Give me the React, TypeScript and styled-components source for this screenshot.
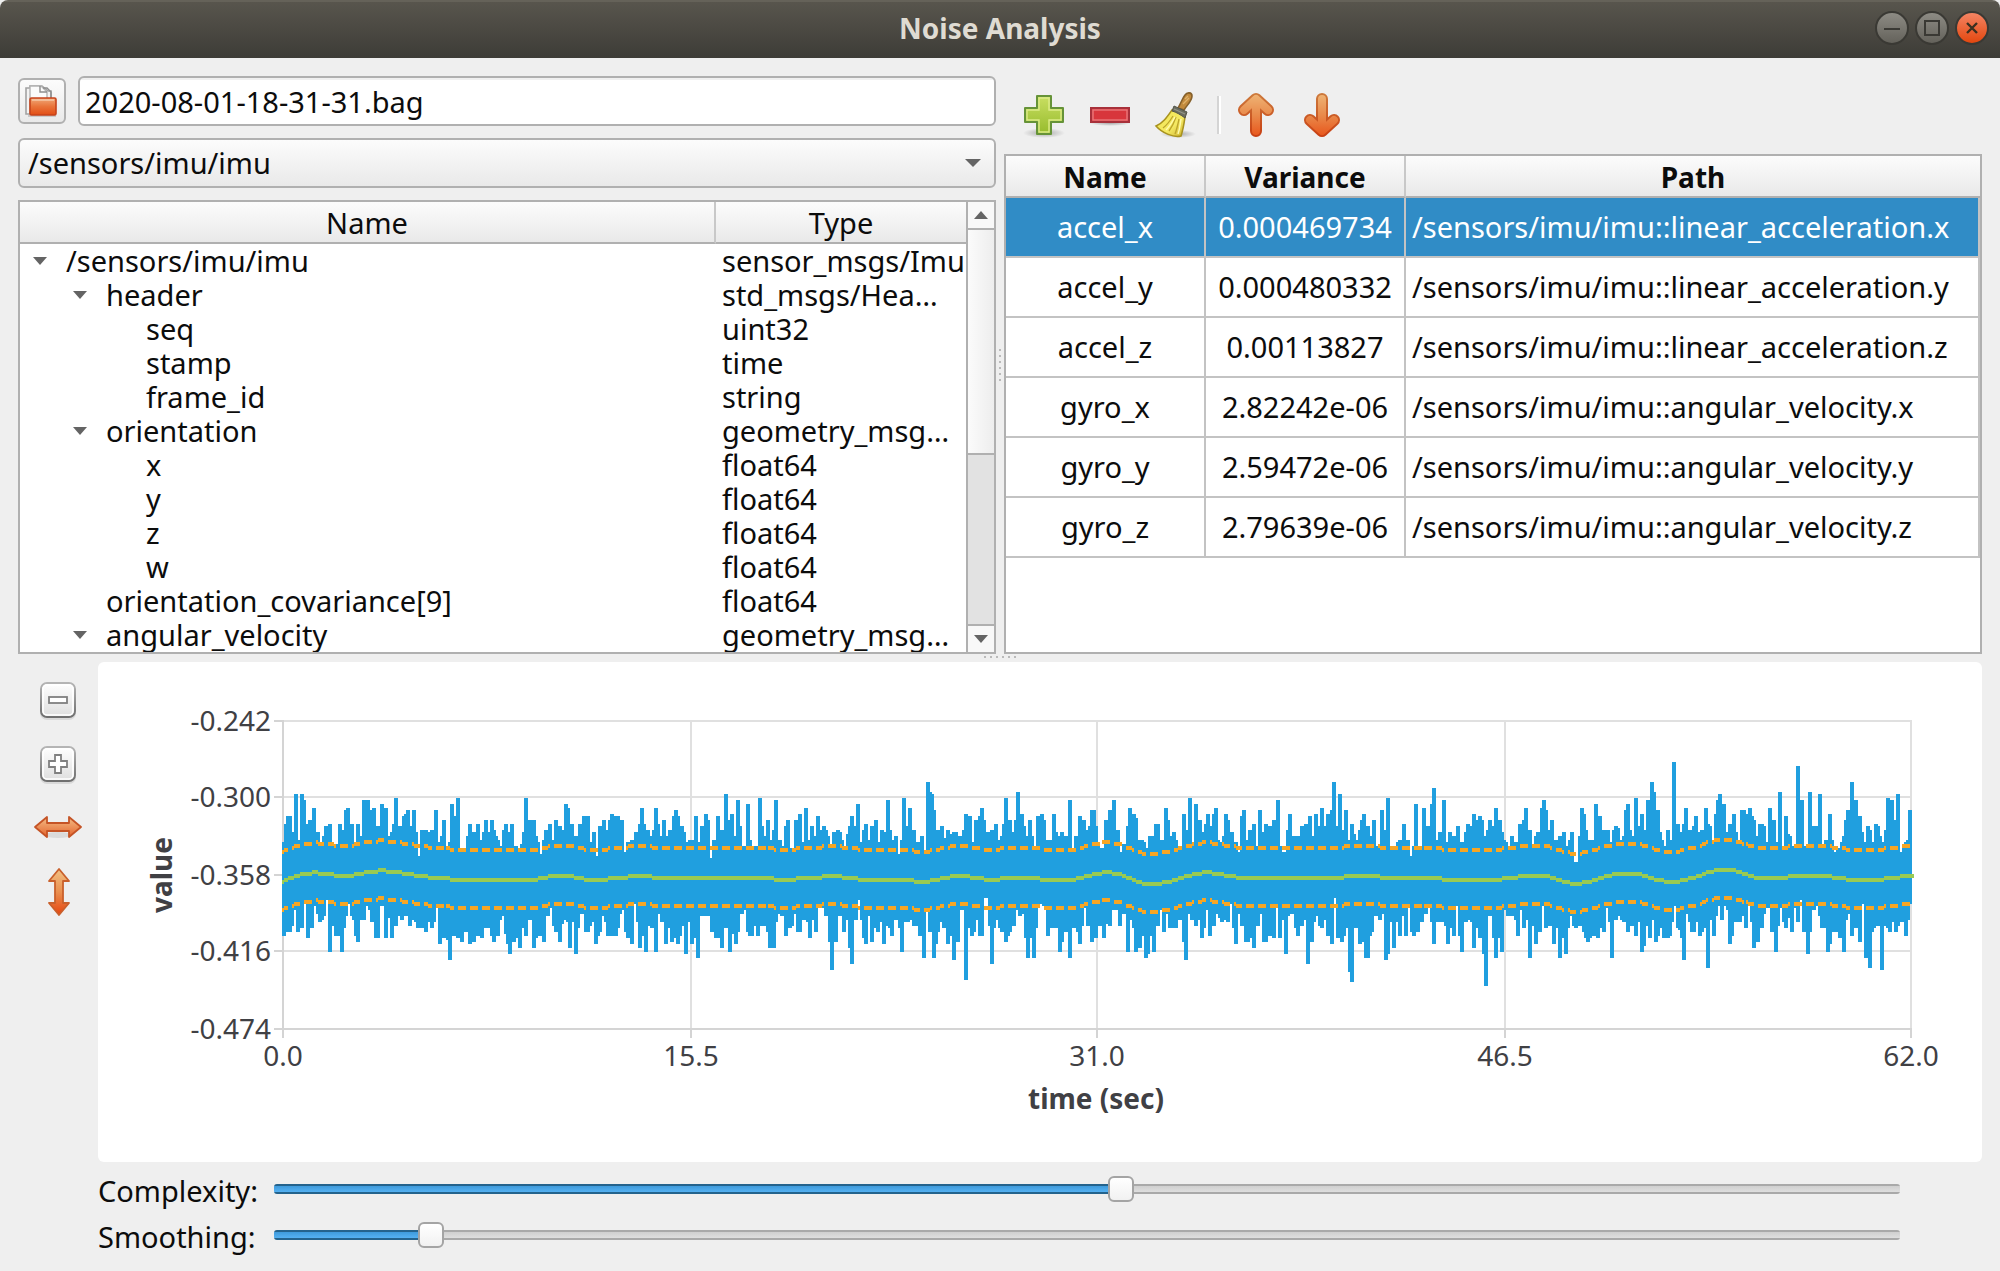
import React, { useState } from 'react';
import styled, { createGlobalStyle, css } from 'styled-components';

const GlobalStyle = createGlobalStyle`
  *, *::before, *::after { box-sizing: border-box; }
  html { background: #efefef; }
  body {
    margin: 0;
    color: #0c0c0c;
    font-family: "Noto Sans", "Open Sans", sans-serif;
    font-size: 29px;
    line-height: 34px;
  }
  button, input, select { font: inherit; color: inherit; margin: 0; }
`;

const edge = '#b0b0b0';
const raised = 'linear-gradient(#fcfcfc, #e9e9e9)';

/* ---------- window frame ---------- */

const Window = styled.div`
  min-height: 100vh;
  background: #efefef;
`;

const TitleBar = styled.header`
  display: grid;
  grid-template-columns: 1fr auto 1fr;
  align-items: center;
  height: 58px;
  padding: 0 11px 2px;
  border-radius: 8px 8px 0 0;
  background: linear-gradient(#656259 0 2px, #58554d 2px, #3d3c37);
`;

const Title = styled.h1`
  grid-column: 2;
  margin: 0;
  color: #dfdbd2;
  font-size: 28px;
  line-height: 34px;
  font-weight: 700;
`;

const WindowButtons = styled.div`
  display: flex;
  justify-content: flex-end;
  gap: 6px;
`;

const WindowButton = styled.button<{ $close?: boolean }>`
  display: grid;
  place-items: center;
  width: 34px;
  height: 34px;
  padding: 0;
  border: 2px solid #3a3934;
  border-radius: 50%;
  background: ${p => (p.$close ? 'linear-gradient(#f58463, #e2470f)' : 'linear-gradient(#8d8b84, #64625b)')};
`;

const Content = styled.main`
  padding: 18px 18px 13px;
`;

const Panels = styled.div`
  display: grid;
  grid-template-columns: minmax(0, 1fr) 8px minmax(0, 1fr);
`;

const Splitter = styled.div<{ $row?: boolean }>`
  display: flex;
  align-items: center;
  justify-content: center;
  ${p => p.$row && css`height: 8px; align-items: flex-start; padding-top: 2px;`}
  &::before {
    content: "";
    ${p => p.$row
      ? css`width: 32px; height: 2px; background: repeating-linear-gradient(90deg, #bababa 0 2px, transparent 2px 6px);`
      : css`width: 2px; height: 32px; background: repeating-linear-gradient(#bababa 0 2px, transparent 2px 6px);`}
  }
`;

/* ---------- left panel ---------- */

const SourcePanel = styled.section`
  display: flex;
  flex-direction: column;
  gap: 12px;
`;

const FileRow = styled.div`
  display: flex;
  align-items: center;
  gap: 12px;
`;

const OpenButton = styled.button`
  display: grid;
  place-items: center;
  width: 48px;
  height: 46px;
  padding: 0;
  border: 2px solid ${edge};
  border-radius: 6px;
  background: ${raised};
`;

const FileInput = styled.input`
  flex: 1;
  min-width: 0;
  height: 50px;
  padding: 0 5px;
  border: 2px solid ${edge};
  border-radius: 6px;
  background: linear-gradient(#f0f0f0 0 2px, #fff 2px);
  outline: none;
`;

const SelectBox = styled.div`
  position: relative;
`;

const TopicSelect = styled.select`
  appearance: none;
  display: block;
  width: 100%;
  height: 50px;
  padding: 0 40px 0 8px;
  border: 2px solid ${edge};
  border-radius: 6px;
  background: ${raised};
`;

const Triangle = styled.span<{ $up?: boolean; $small?: boolean }>`
  display: block;
  width: ${p => (p.$small ? 14 : 16)}px;
  height: 8px;
  background: #646464;
  clip-path: ${p => (p.$up ? 'polygon(50% 0, 100% 100%, 0 100%)' : 'polygon(0 0, 100% 0, 50% 100%)')};
`;

const SelectArrow = styled(Triangle)`
  position: absolute;
  right: 15px;
  top: 21px;
  pointer-events: none;
`;

const TreeFrame = styled.div`
  display: flex;
  height: 454px;
  border: 2px solid ${edge};
  background: #fff;
  overflow: hidden;
`;

const TreeTable = styled.table`
  flex: 1;
  min-width: 0;
  width: 0;
  table-layout: fixed;
  border-collapse: separate;
  border-spacing: 0;
  th {
    height: 42px;
    padding: 2px 0 0;
    border-bottom: 2px solid ${edge};
    background: ${raised};
    font-weight: 400;
  }
  th:first-child { border-right: 2px solid #c8c8c8; }
  th:last-child { width: 250px; }
  td {
    height: 34px;
    padding: 0;
    white-space: nowrap;
  }
  td:last-child { padding-left: 6px; }
`;

const Node = styled.div<{ $depth: number }>`
  display: flex;
  align-items: center;
  gap: 12px;
  padding-left: ${p => 6 + p.$depth * 40}px;
`;

const Toggle = styled.button`
  display: grid;
  place-items: center;
  width: 28px;
  height: 34px;
  padding: 0;
  border: 0;
  background: none;
`;

const NoToggle = styled.span`
  width: 28px;
`;

const ScrollBar = styled.div`
  display: flex;
  flex-direction: column;
  width: 28px;
  border-left: 2px solid ${edge};
  background: #e2e2e2;
`;

const ScrollButton = styled.button`
  display: grid;
  place-items: center;
  height: 26px;
  padding: 0;
  border: 0;
  background: #f8f8f8;
`;

const ScrollTrack = styled.div`
  flex: 1;
  border: solid ${edge};
  border-width: 2px 0;
`;

const ScrollThumb = styled.div`
  height: 57%;
  border-bottom: 2px solid ${edge};
  background: linear-gradient(90deg, #fbfbfb, #ededed);
`;

/* ---------- right panel ---------- */

const ResultPanel = styled.section`
  display: flex;
  flex-direction: column;
`;

const ToolBar = styled.div`
  display: flex;
  align-items: center;
  height: 78px;
  padding-left: 16px;
  gap: 18px;
`;

const ToolButton = styled.button`
  display: grid;
  place-items: center;
  width: 48px;
  height: 48px;
  padding: 0;
  border: 0;
  background: none;
`;

const ToolSeparator = styled.span`
  width: 4px;
  height: 38px;
  margin: 0 -7px 0 -1px;
  border-left: 2px solid #d4d4d4;
  border-right: 2px solid #fff;
`;

const ResultFrame = styled.div`
  flex: 1;
  border: 2px solid ${edge};
  background: #fff;
`;

const ResultTable = styled.table`
  width: 100%;
  table-layout: fixed;
  border-collapse: separate;
  border-spacing: 0;
  th {
    height: 42px;
    padding: 2px 0 0;
    border-bottom: 2px solid ${edge};
    background: ${raised};
    font-size: 28px;
    font-weight: 700;
  }
  th:not(:last-child) { width: 200px; border-right: 2px solid #c8c8c8; }
  td {
    height: 60px;
    padding: 0;
    border: solid #c3c3c3;
    border-width: 0 2px 2px 0;
    text-align: center;
    white-space: nowrap;
  }
  td:last-child { padding-left: 6px; text-align: left; }
`;

const ResultRow = styled.tr<{ $selected: boolean }>`
  ${p => p.$selected && css`
    color: #fff;
    td { background: #308cc6; background-clip: padding-box; }
  `}
`;

/* ---------- chart and sliders ---------- */

const ChartArea = styled.section`
  display: grid;
  grid-template-columns: 80px minmax(0, 1fr);
`;

const ZoomTools = styled.div`
  display: flex;
  flex-direction: column;
  align-items: center;
  gap: 16px;
  padding-top: 14px;
`;

const ChartCard = styled.div`
  border-radius: 6px;
  background: #fff;
  overflow: hidden;
`;

const ChartSvg = styled.svg`
  display: block;
  width: 100%;
  height: auto;
  font-size: 28px;
  text { fill: #404044; }
`;

const Sliders = styled.div`
  grid-column: 2;
  padding: 4px 82px 0 0;
`;

const SliderRow = styled.div`
  display: grid;
  grid-template-columns: 176px 1fr;
  align-items: center;
  height: 46px;
`;

const SliderLabel = styled.label`
  padding-top: 4px;
`;

const Range = styled.input`
  appearance: none;
  display: block;
  width: 100%;
  height: 26px;
  background: none;
  &::-webkit-slider-runnable-track {
    height: 10px;
    border-radius: 3px;
    background:
      linear-gradient(#24638d 0 2px, #3f9bdc 2px, #55b1f2 8px, #24638d 8px) 0 0 / calc(13px + (100% - 26px) * var(--level)) 100% no-repeat,
      linear-gradient(#a9a9a9 0 2px, #cfcfcf 2px, #dedede 8px, #a9a9a9 8px);
  }
  &::-webkit-slider-thumb {
    appearance: none;
    width: 26px;
    height: 26px;
    margin-top: -8px;
    border: 2px solid #a4a4a4;
    border-radius: 6px;
    background: linear-gradient(#fff, #f1f1f1);
  }
`;

/* ---------- icons ---------- */

const FolderIcon = () => (
  <svg width="36" height="36" viewBox="0 0 36 36" aria-hidden="true">
    <defs>
      <linearGradient id="folder" x1="0" y1="0" x2="0" y2="1">
        <stop offset="0" stopColor="#f0a878" /><stop offset="0.5" stopColor="#e9743a" /><stop offset="1" stopColor="#e24d14" />
      </linearGradient>
    </defs>
    <path d="M2 5h4V3h12l6 5h3v23H2z" fill="#f3f3f3" stroke="#a2a2a2" strokeWidth="1.6" />
    <path d="M6 30V3h11l6 6v6" fill="#fbfbfb" stroke="#b4b4b4" strokeWidth="1.4" />
    <path d="M16 3v6h7M19 5h4l4 4v6" fill="none" stroke="#8e8e8e" strokeWidth="1.4" />
    <path d="M4 33h28" stroke="#c9c9c9" strokeWidth="2" />
    <rect x="6" y="15" width="26" height="17" rx="1.5" fill="url(#folder)" stroke="#c6431b" strokeWidth="1.6" />
    <path d="M8 17h22" stroke="#f6c6a4" strokeWidth="1.6" />
  </svg>
);

const PlusIcon = () => (
  <svg width="48" height="48" viewBox="0 0 48 48" aria-hidden="true">
    <defs>
      <linearGradient id="plus" x1="0" y1="0" x2="0" y2="1">
        <stop offset="0" stopColor="#c9df62" /><stop offset="1" stopColor="#96bb2c" />
      </linearGradient>
      <radialGradient id="shade"><stop offset="0" stopColor="#000" stopOpacity="0.3" /><stop offset="1" stopColor="#000" stopOpacity="0" /></radialGradient>
    </defs>
    <ellipse cx="24" cy="42" rx="21" ry="5" fill="url(#shade)" />
    <path d="M17 5h14v12h12v14H31v12H17V31H5V17h12z" fill="url(#plus)" stroke="#669338" strokeWidth="2" strokeLinejoin="round" />
    <path d="M19 7h10v12h12v10H29v12H19V29H7V19h12z" fill="none" stroke="#dceb88" strokeWidth="1.4" />
  </svg>
);

const MinusIcon = () => (
  <svg width="48" height="48" viewBox="0 0 48 48" aria-hidden="true">
    <ellipse cx="24" cy="32" rx="21" ry="3" fill="url(#shade)" />
    <rect x="5" y="17" width="38" height="14" fill="#d8363c" stroke="#a8303a" strokeWidth="2" />
    <rect x="7" y="19" width="34" height="10" fill="none" stroke="#e8777a" strokeWidth="1.4" />
  </svg>
);

const BroomIcon = () => (
  <svg width="48" height="48" viewBox="0 0 48 48" aria-hidden="true">
    <defs>
      <linearGradient id="straw" x1="0" y1="0" x2="1" y2="1">
        <stop offset="0" stopColor="#f2e552" /><stop offset="0.6" stopColor="#f5ea63" /><stop offset="1" stopColor="#cdb02c" />
      </linearGradient>
    </defs>
    <ellipse cx="26" cy="43" rx="18" ry="4" fill="url(#shade)" />
    <path d="M26 17c3-5 4-9 7-13 2-3 7-3 7 1 0 5-5 9-8 14z" fill="#c28a3d" stroke="#85602b" strokeWidth="1.6" />
    <path d="M33 8l3-3M31 13l6-6" stroke="#e0b26a" strokeWidth="1.4" />
    <path d="M20 19c5 1 10 4 13 7-1 7-2 13-4 19-7 2-19-3-25-10 7-3 11-9 16-16z" fill="url(#straw)" stroke="#a8921f" strokeWidth="1.6" />
    <path d="M21 25c-3 5-6 9-10 12M24 26c-2 6-4 10-7 14M27 28c-1 5-2 10-4 15" fill="none" stroke="#bda52c" strokeWidth="1.3" />
    <path d="M23 26c-3 5-5 9-9 13M29 28c-1 6-1 10-3 15" fill="none" stroke="#fffbb0" strokeWidth="1.4" />
    <path d="M22 15l13 6-2 6c-4-3-9-6-13-7z" fill="#6b6d5f" stroke="#53554a" strokeWidth="1" />
    <path d="M22 18l11 5" stroke="#93958a" strokeWidth="1.2" />
  </svg>
);

const ArrowIcon = ({ down = false }: { down?: boolean }) => (
  <svg width="48" height="48" viewBox="0 0 48 48" aria-hidden="true">
    <defs>
      <linearGradient id="arrow" gradientUnits="userSpaceOnUse" x1="0" y1="2" x2="0" y2="46">
        <stop offset="0" stopColor="#efb677" /><stop offset="0.5" stopColor="#e98a4b" /><stop offset="1" stopColor="#e8541a" />
      </linearGradient>
      <linearGradient id="arrowEdge" gradientUnits="userSpaceOnUse" x1="0" y1="2" x2="0" y2="46">
        <stop offset="0" stopColor="#cd7a3c" /><stop offset="1" stopColor="#c83f12" />
      </linearGradient>
    </defs>
    {['url(#arrowEdge)', 'url(#arrow)'].map((stroke, i) => (
      <path
        key={stroke}
        d={down ? 'M24 8V39M12 29L24 40L36 29' : 'M24 40V9M12 19L24 8L36 19'}
        fill="none" stroke={stroke} strokeWidth={i ? 8 : 12} strokeLinecap="round" strokeLinejoin="round"
      />
    ))}
  </svg>
);

const ZoomIcon = ({ plus = false }: { plus?: boolean }) => (
  <svg width="48" height="48" viewBox="0 0 48 48" aria-hidden="true">
    <defs>
      <linearGradient id="keyEdge" x1="0" y1="0" x2="0" y2="1">
        <stop offset="0" stopColor="#b5b5b5" /><stop offset="1" stopColor="#6f6f6f" />
      </linearGradient>
      <linearGradient id="keyFace" x1="0" y1="0" x2="0" y2="1">
        <stop offset="0" stopColor="#fff" /><stop offset="1" stopColor="#dedede" />
      </linearGradient>
    </defs>
    <rect x="6" y="9" width="36" height="35" rx="7" fill="#d9d9d9" />
    <rect x="7" y="7" width="34" height="34" rx="6" fill="url(#keyFace)" stroke="url(#keyEdge)" strokeWidth="2" />
    <rect x="9" y="9" width="30" height="30" rx="4" fill="none" stroke="#fff" strokeWidth="1.6" />
    {plus
      ? <path d="M21 15h6v6h6v6h-6v6h-6v-6h-6v-6h6z" fill="#fff" stroke="#808080" strokeWidth="1.8" />
      : <rect x="15" y="21" width="18" height="6" fill="#fff" stroke="#808080" strokeWidth="1.8" />}
  </svg>
);

const FitIcon = ({ vertical = false }: { vertical?: boolean }) => (
  <svg width="48" height="48" viewBox="0 0 48 48" aria-hidden="true">
    <defs>
      <linearGradient id="fitH" x1="0" y1="0" x2="0" y2="1">
        <stop offset="0" stopColor="#f3bd86" /><stop offset="1" stopColor="#e4632c" />
      </linearGradient>
      <linearGradient id="fitV" x1="0" y1="0" x2="0" y2="1">
        <stop offset="0" stopColor="#f2c184" /><stop offset="0.5" stopColor="#ea8f4f" /><stop offset="1" stopColor="#e6450f" />
      </linearGradient>
    </defs>
    {!vertical && <ellipse cx="24" cy="31" rx="14" ry="3" fill="#dadada" />}
    {vertical
      ? <path d="M25 1L35 13H29V35H35L25 47L15 35H21V13H15z" fill="url(#fitV)" stroke="#c9602c" strokeWidth="1.8" strokeLinejoin="round" />
      : <path d="M1 23L13 13V19H35V13L47 23L35 33V27H13V33z" fill="url(#fitH)" stroke="#c55426" strokeWidth="1.8" strokeLinejoin="round" />}
  </svg>
);

/* ---------- data ---------- */

type Field = { name: string; type: string; depth: number; open?: boolean };

const fields: Field[] = [
  { name: '/sensors/imu/imu', type: 'sensor_msgs/Imu', depth: 0, open: true },
  { name: 'header', type: 'std_msgs/Hea…', depth: 1, open: true },
  { name: 'seq', type: 'uint32', depth: 2 },
  { name: 'stamp', type: 'time', depth: 2 },
  { name: 'frame_id', type: 'string', depth: 2 },
  { name: 'orientation', type: 'geometry_msg…', depth: 1, open: true },
  { name: 'x', type: 'float64', depth: 2 },
  { name: 'y', type: 'float64', depth: 2 },
  { name: 'z', type: 'float64', depth: 2 },
  { name: 'w', type: 'float64', depth: 2 },
  { name: 'orientation_covariance[9]', type: 'float64', depth: 1 },
  { name: 'angular_velocity', type: 'geometry_msg…', depth: 1, open: true },
];

const results = [
  ['accel_x', '0.000469734', '/sensors/imu/imu::linear_acceleration.x'],
  ['accel_y', '0.000480332', '/sensors/imu/imu::linear_acceleration.y'],
  ['accel_z', '0.00113827', '/sensors/imu/imu::linear_acceleration.z'],
  ['gyro_x', '2.82242e-06', '/sensors/imu/imu::angular_velocity.x'],
  ['gyro_y', '2.59472e-06', '/sensors/imu/imu::angular_velocity.y'],
  ['gyro_z', '2.79639e-06', '/sensors/imu/imu::angular_velocity.z'],
];

// Signal traces as "x,y" steps: each value holds until the next x.
// Units are thirds of a chart unit; `at` is where a block's local x axis begins.
type Block = { at: number; steps: string };

const highs: Block[] = [
  { at: 0, steps: '36,426 42,372 48,348 66,396 72,282 84,420 90,282 102,300 108,372 114,360 126,324 138,396 150,438 156,408 162,378 174,372 186,426 192,432 204,372 216,390 222,330 228,324 240,372 252,432 258,372 270,408 276,300 300,330 306,324 318,378 330,312 342,324 354,408 360,396 366,372 372,294 384,378 396,348 402,342 408,330 420,378 426,330 438,396 444,468 450,390 474,396 480,390 492,330 504,426 510,408 516,360 528,438 534,426 540,312 552,348 558,294 570,444 588,408 594,372 606,396 618,372 630,420 636,396 642,360 654,396 660,360 672,390 678,408 684,420 690,438 696,390 702,372 714,396 720,372 732,438 744,444 750,432 756,396 762,294 774,360 798,408 804,426 810,462 816,420 822,390 834,372 846,420 852,360 864,378 876,390 882,312 894,324 900,372 912,408 924,372 936,348 960,426 966,396 978,468 984,378 996,360 1008,390 1014,360 1020,342 1032,348 1050,360 1062,456 1068,426 1080,420 1092,396 1104,372 1110,324 1122,372 1128,390 1140,408 1146,390 1152,324 1164,372 1170,408 1176,360 1188,408 1194,390 1206,348 1212,330 1224,348 1230,378 1242,396 1248,426 1254,420 1272,348 1284,426 1290,378 1302,342 1314,360 1320,474 1326,420 1338,348 1350,390 1362,282 1374,360 1380,342 1392,408 1398,300 1410,378 1416,438 1428,312 1440,420 1446,438 1464,294 1476,378 1482,408 1488,360' },
  { at: 1500, steps: '0,420 6,390 12,300 24,420 36,438 42,378 48,360 60,444 72,360 84,342 96,426 102,324 114,420 120,378 132,408 138,348 150,390 156,378 168,390 174,408 180,438 186,396 198,390 210,396 216,420 222,438 228,402 234,378 240,348 252,378 258,312 270,426 276,390 282,372 294,420 300,378 312,360 324,426 330,390 342,396 348,300 360,390 366,420 372,408 384,462 390,420 396,294 408,378 414,324 426,390 438,426 450,408 462,456 468,246 480,276 486,282 492,330 498,390 510,378 522,414 528,390 540,402 546,396 564,408 576,390 582,342 594,348 606,426 612,360 624,348 630,324 642,360 648,396 660,390 672,372 684,420 690,408 696,372 702,294 714,360 726,396 732,360 738,276 750,342 762,378 768,408 774,360 786,408 792,438 798,348 810,342 822,360 828,420 846,342 858,396 864,408 870,396 882,408 894,300 906,444 912,408 924,348 936,360 948,390 954,378 960,330 978,378 984,432 990,444 1002,360 1014,330 1026,300 1038,390 1050,456 1056,432 1068,378 1074,324 1086,342 1098,354 1104,420 1122,426 1128,444 1134,408 1152,372 1170,420 1182,324 1194,360 1200,408 1206,396 1218,420 1224,438 1236,342 1248,390 1254,294 1266,432 1272,312 1284,360 1296,396 1302,372 1308,342 1320,378 1326,342 1332,324 1344,420 1350,426 1356,408 1362,342 1374,360 1380,396 1392,426 1404,456 1410,348 1416,330 1428,420 1434,390 1446,372 1458,438 1464,330 1476,396 1482,372 1494,378' },
  { at: 2730, steps: '276,360 288,300 300,438 306,456 318,390 324,342 336,408 360,378 372,372 384,348 396,408 402,342 414,378 420,324 432,378 438,342 450,330 456,246 468,378 474,282 486,390 492,330 504,420 510,372 522,402 528,420 534,390 540,360 546,342 558,378 570,408 576,360 588,438 600,330 612,390 618,294 630,438 648,426 654,420 666,372 678,420 690,468 696,438 702,312 714,438 726,324 738,378 750,312 756,264 768,420 774,396 786,300 798,426 804,396 816,408 828,378 840,426 852,396 858,372 870,378 876,342 888,360 894,348 906,360 912,408 918,390 924,360 936,378 942,324 954,360 966,396 972,420 978,426 984,444 990,408 1002,426 1014,372 1026,360 1032,324 1044,390 1056,432 1062,408 1068,396 1080,324 1086,300 1098,330 1104,390 1110,360 1122,420 1134,408' },
  { at: 3870, steps: '0,408 6,396 18,438 24,420 30,396 42,486 54,408 60,324 72,342 78,390 84,420 102,312 114,348 126,390 150,426 156,390 162,378 174,384 180,420 186,408 192,330 198,312 210,390 216,408 222,294 234,378 240,342 252,390 258,300 270,246 282,276 288,330 300,396 306,420 312,438 318,390 330,420 336,186 348,372 360,396 366,372 372,324 384,390 396,378 402,348 414,396 420,390 432,324 444,372 450,378 456,432 462,342 468,300 474,282 486,312 498,396 504,372 516,342 528,396 534,426 540,330 558,342 564,324 576,348 582,360 588,408 594,372 612,378 618,426 624,324 636,360 648,426 654,276 666,438 672,348 684,402 690,408 696,438 708,198 720,300 732,438 744,276 756,378 774,282 786,444 792,420 804,342 816,420 822,456 828,444 840,426 846,408 852,360 858,330 870,246 882,300 894,348 906,396 912,426 918,378 930,390 936,426 942,372 954,378 960,408 966,426 972,390 978,294 990,300 1002,360 1008,282 1020,456 1026,444 1032,426 1038,420 1044,330' },
];

const lows: Block[] = [
  { at: 0, steps: '36,708 48,696 66,678 72,630 78,696 90,684 102,612 108,714 120,684 132,618 138,642 144,666 156,660 162,648 168,600 174,756 186,678 192,708 210,756 222,684 228,648 234,612 240,648 246,660 252,708 258,726 270,660 288,618 294,630 300,666 312,714 330,618 342,714 354,654 360,714 372,678 384,648 390,660 402,648 414,678 426,660 432,666 438,684 462,696 474,666 480,684 492,666 498,624 504,732 516,714 528,720 534,780 546,708 558,714 570,726 582,696 594,732 606,726 618,708 630,714 642,684 660,708 666,726 678,708 690,660 696,648 702,702 708,732 714,762 726,726 738,714 744,744 756,684 762,708 774,660 786,744 798,714 804,708 816,726 828,648 840,624 846,678 852,696 864,726 876,672 882,660 888,666 894,744 906,666 912,762 924,684 930,642 942,696 960,678 966,666 972,732 984,708 990,696 996,648 1002,666 1008,708 1044,684 1050,642 1056,630 1062,696 1068,714 1080,732 1092,612 1098,666 1104,744 1116,708 1122,756 1134,678 1140,684 1152,756 1164,642 1170,666 1182,732 1194,684 1200,726 1212,714 1218,732 1230,708 1236,678 1242,762 1254,666 1260,732 1272,714 1278,774 1290,648 1320,696 1332,714 1350,744 1362,684 1374,756 1386,702 1392,732 1404,696 1410,642 1422,630 1428,696 1434,708 1452,678 1458,708 1470,678 1488,696 1494,744' },
  { at: 1500, steps: '0,744 18,666 24,642 30,648 42,708 54,684 66,678 72,642 78,696 96,660 108,666 114,714 126,660 132,696 144,624 162,648 174,726 180,810 192,726 204,648 216,696 228,660 234,744 240,792 252,660 264,600 270,660 276,714 282,732 294,648 300,726 312,684 318,696 330,666 336,732 348,678 354,684 360,708 372,660 384,684 390,756 402,666 420,660 426,678 444,708 456,774 468,636 474,696 486,774 498,732 504,696 510,666 516,684 528,732 540,708 546,780 558,726 570,630 582,840 594,684 600,708 612,696 618,660 624,708 642,594 654,678 660,792 672,684 678,660 684,684 690,696 702,726 714,708 720,696 726,678 738,630 744,648 756,642 762,714 768,774 780,714 786,774 798,684 804,612 816,618 828,708 840,684 864,756 876,726 882,696 894,774 906,684 918,696 924,732 936,678 942,624 948,678 960,726 972,714 984,678 996,714 1008,672 1014,678 1026,630 1044,678 1056,642 1068,756 1080,660 1086,684 1092,756 1104,744 1116,708 1122,774 1134,762 1140,708 1146,756 1158,678 1170,630 1176,696 1188,642 1194,684 1224,660 1236,726 1242,780 1254,642 1260,660 1272,678 1284,660 1290,714 1302,684 1308,630 1314,708 1326,678 1338,642 1344,654 1350,666 1362,660 1368,666 1380,612 1386,684 1392,732 1404,642 1410,678 1422,726 1440,714 1446,744 1458,678 1470,642 1476,726 1494,708' },
  { at: 2730, steps: '276,714 288,624 294,714 306,660 312,762 324,648 330,642 342,684 348,708 360,678 372,660 378,792 390,726 402,666 408,648 414,678 420,684 432,660 438,708 450,732 462,594 468,714 480,726 492,708 498,684 504,816 510,846 522,684 534,732 546,726 552,774 570,708 576,696 582,648 594,660 606,642 612,780 624,762 630,666 636,744 648,666 654,708 666,648 672,708 684,618 690,696 696,708 708,696 720,666 732,642 744,624 750,666 756,732 768,666 792,678 798,732 810,684 816,708 828,618 834,708 840,756 852,666 864,660 870,666 876,744 888,684 894,714 906,762 912,858 924,648 936,714 942,774 954,714 960,756 972,630 978,648 1002,660 1008,708 1020,630 1026,684 1038,660 1044,774 1056,678 1062,732 1074,696 1086,618 1092,684 1104,678 1116,732 1128,684 1134,774' },
  { at: 3870, steps: '0,774 6,714 12,762 24,684 30,648 36,678 42,684 54,678 66,696 72,714 78,726 90,714 96,708 108,714 120,684 126,696 138,624 144,666 150,774 162,660 174,648 180,660 186,666 198,696 210,678 222,708 234,666 240,756 252,738 258,678 264,714 276,660 282,726 294,708 300,684 306,714 330,708 336,666 342,618 348,684 354,690 360,714 366,780 378,642 384,666 390,696 408,666 414,708 426,696 432,684 438,804 450,660 456,708 468,648 474,618 480,660 492,618 498,630 504,732 516,708 522,666 546,648 552,684 564,618 570,666 576,744 588,726 600,684 612,642 618,624 630,696 642,756 654,678 660,624 666,666 672,684 684,654 690,696 702,624 708,666 720,600 726,696 738,762 750,696 756,630 768,618 774,648 780,684 798,756 810,732 816,696 834,714 846,756 858,660 864,642 870,708 882,684 894,726 906,612 912,774 924,804 936,696 942,684 948,678 960,810 972,678 978,684 984,696 996,666 1002,696 1014,678 1020,666 1032,708 1044,660 1050,612' },
];

const means: Block[] = [
  { at: 0, steps: '36,546 42,540 54,534 72,528 90,522 126,516 144,522 192,528 252,522 282,516 324,510 348,516 396,522 432,528 474,534 540,540 804,534 834,528 912,534 942,540 1014,534 1074,528 1146,534' },
  { at: 1500, steps: '12,540 78,534 156,528 216,534 264,540 432,546 480,540 510,534 540,528 600,534 642,540 690,534 810,540 918,534 942,528 966,522 996,516 1026,522 1056,528 1068,534 1086,540 1098,546 1116,552 1176,546 1206,540 1224,534 1242,528 1266,522 1296,516 1326,522 1362,528 1398,534' },
  { at: 2730, steps: '492,528 600,534 786,540 966,534 1014,528 1110,534 1128,540' },
  { at: 3870, steps: '6,546 30,552 66,546 96,540 114,534 132,528 156,522 246,528 264,534 282,540 312,546 360,540 384,534 408,528 426,522 438,516 462,510 528,516 546,522 564,528 582,534 684,528 816,534 858,540 972,534 1020,528' },
];

type Step = [number, number];

const traceEnd = 4926;
const column = 6;

const decode = (blocks: Block[]): Step[] =>
  blocks.flatMap(({ at, steps }) =>
    steps.split(' ').map((pair): Step => {
      const [x, y] = pair.split(',').map(Number);
      return [at + x, y];
    }),
  );

const outline = (steps: Step[]) =>
  steps.flatMap(([x, y], i) => [[x, y], [i + 1 < steps.length ? steps[i + 1][0] : traceEnd, y]]);

const bandPath = `M${[...outline(decode(highs)), ...outline(decode(lows)).reverse()]
  .map(p => p.join(' '))
  .join('L')}Z`;

const meanSteps = decode(means);

const bar = (x: number, y: number, width: number) => `M${x} ${y - 6}h${width}v12h${-width}z`;

const meanPath = meanSteps
  .map(([x, y], i) => bar(x, y, (i + 1 < meanSteps.length ? meanSteps[i + 1][0] : traceEnd + column) - x))
  .join('');

// Dashed one-sigma bounds follow the mean, one column at a time.
const dashPath = (offset: number) => {
  let path = '';
  let index = 0;
  for (let start = 30; start < traceEnd; start += 35.78) {
    const first = Math.round(start / column) * column;
    for (let x = Math.max(first, 36); x < Math.min(first + 24, traceEnd); x += column) {
      while (index + 1 < meanSteps.length && meanSteps[index + 1][0] <= x) index += 1;
      path += bar(x, meanSteps[index][1] + offset, column);
    }
  }
  return path;
};

const yTicks: [number, string][] = [[59, '-0.242'], [135, '-0.300'], [213, '-0.358'], [289, '-0.416'], [367, '-0.474']];
const xTicks: [number, string][] = [[185, '0.0'], [593, '15.5'], [999, '31.0'], [1407, '46.5'], [1813, '62.0']];

const NoiseChart = () => (
  <ChartSvg viewBox="0 0 1884 500" role="img" aria-label="Noise over time">
    <g strokeWidth="2" stroke="#e0e0e0" shapeRendering="crispEdges">
      {yTicks.map(([y]) => <path key={y} d={`M184 ${y}H1814`} />)}
      {xTicks.map(([x]) => <path key={x} d={`M${x} 58V368`} />)}
    </g>
    <g strokeWidth="2" stroke="#d4d4d4" shapeRendering="crispEdges">
      <path d="M185 58V376M176 367H1814" />
      {yTicks.map(([y]) => <path key={y} d={`M176 ${y}h8`} />)}
      {xTicks.map(([x]) => <path key={x} d={`M${x} 368v8`} />)}
    </g>
    <g transform="translate(172 38) scale(0.333333)" shapeRendering="crispEdges">
      <path d={bandPath} fill="#209fdf" />
      <path d={meanPath} fill="#99ca53" />
      <path d={dashPath(-90)} fill="#f6a625" />
      <path d={dashPath(84)} fill="#f6a625" />
    </g>
    {yTicks.map(([y, label]) => <text key={label} x="173" y={y + 10} textAnchor="end">{label}</text>)}
    {xTicks.map(([x, label]) => <text key={label} x={x} y="404" textAnchor="middle">{label}</text>)}
    <text x="998" y="447" textAnchor="middle" fontWeight="700">time (sec)</text>
    <text transform="translate(74 213) rotate(-90)" textAnchor="middle" fontWeight="700">value</text>
  </ChartSvg>
);

/* ---------- page ---------- */

const sliderMax = 800;

const Slider = ({ id, label, initial }: { id: string; label: string; initial: number }) => {
  const [value, setValue] = useState(initial);
  return (
    <SliderRow>
      <SliderLabel htmlFor={id}>{label}</SliderLabel>
      <Range
        id={id}
        type="range"
        min={0}
        max={sliderMax}
        value={value}
        onChange={e => setValue(Number(e.target.value))}
        style={{ '--level': value / sliderMax } as React.CSSProperties}
      />
    </SliderRow>
  );
};

export default function App() {
  const [file, setFile] = useState('2020-08-01-18-31-31.bag');
  const [selected, setSelected] = useState('accel_x');

  return (
    <Window>
      <GlobalStyle />
      <TitleBar>
        <Title>Noise Analysis</Title>
        <WindowButtons>
          <WindowButton aria-label="Minimize">
            <svg width="18" height="18" viewBox="0 0 18 18"><path d="M1 10h16" stroke="#3a3934" strokeWidth="2" /></svg>
          </WindowButton>
          <WindowButton aria-label="Maximize">
            <svg width="18" height="18" viewBox="0 0 18 18"><rect x="2" y="2" width="14" height="14" fill="none" stroke="#3a3934" strokeWidth="2" /></svg>
          </WindowButton>
          <WindowButton $close aria-label="Close">
            <svg width="18" height="18" viewBox="0 0 18 18"><path d="M4 4l10 10M14 4L4 14" stroke="#3a3020" strokeWidth="2.4" /></svg>
          </WindowButton>
        </WindowButtons>
      </TitleBar>

      <Content>
        <Panels>
          <SourcePanel>
            <FileRow>
              <OpenButton aria-label="Open bag file"><FolderIcon /></OpenButton>
              <FileInput aria-label="Bag file" value={file} onChange={e => setFile(e.target.value)} />
            </FileRow>
            <SelectBox>
              <TopicSelect aria-label="Topic"><option>/sensors/imu/imu</option></TopicSelect>
              <SelectArrow />
            </SelectBox>
            <TreeFrame>
              <TreeTable>
                <thead><tr><th>Name</th><th>Type</th></tr></thead>
                <tbody>
                  {fields.map(field => (
                    <tr key={field.name}>
                      <td>
                        <Node $depth={field.depth}>
                          {field.open
                            ? <Toggle aria-label={`Collapse ${field.name}`}><Triangle $small /></Toggle>
                            : <NoToggle />}
                          {field.name}
                        </Node>
                      </td>
                      <td>{field.type}</td>
                    </tr>
                  ))}
                </tbody>
              </TreeTable>
              <ScrollBar>
                <ScrollButton aria-label="Scroll up"><Triangle $up $small /></ScrollButton>
                <ScrollTrack><ScrollThumb /></ScrollTrack>
                <ScrollButton aria-label="Scroll down"><Triangle $small /></ScrollButton>
              </ScrollBar>
            </TreeFrame>
          </SourcePanel>

          <Splitter />

          <ResultPanel>
            <ToolBar>
              <ToolButton aria-label="Add"><PlusIcon /></ToolButton>
              <ToolButton aria-label="Remove"><MinusIcon /></ToolButton>
              <ToolButton aria-label="Clear"><BroomIcon /></ToolButton>
              <ToolSeparator />
              <ToolButton aria-label="Move up"><ArrowIcon /></ToolButton>
              <ToolButton aria-label="Move down"><ArrowIcon down /></ToolButton>
            </ToolBar>
            <ResultFrame>
              <ResultTable>
                <thead><tr><th>Name</th><th>Variance</th><th>Path</th></tr></thead>
                <tbody>
                  {results.map(([name, variance, path]) => (
                    <ResultRow key={name} $selected={name === selected} onClick={() => setSelected(name)}>
                      <td>{name}</td>
                      <td>{variance}</td>
                      <td>{path}</td>
                    </ResultRow>
                  ))}
                </tbody>
              </ResultTable>
            </ResultFrame>
          </ResultPanel>
        </Panels>

        <Splitter $row />

        <ChartArea>
          <ZoomTools>
            <ToolButton aria-label="Zoom out"><ZoomIcon /></ToolButton>
            <ToolButton aria-label="Zoom in"><ZoomIcon plus /></ToolButton>
            <ToolButton aria-label="Fit width"><FitIcon /></ToolButton>
            <ToolButton aria-label="Fit height"><FitIcon vertical /></ToolButton>
          </ZoomTools>
          <ChartCard><NoiseChart /></ChartCard>
          <Sliders>
            <Slider id="complexity" label="Complexity:" initial={417} />
            <Slider id="smoothing" label="Smoothing:" initial={72} />
          </Sliders>
        </ChartArea>
      </Content>
    </Window>
  );
}
